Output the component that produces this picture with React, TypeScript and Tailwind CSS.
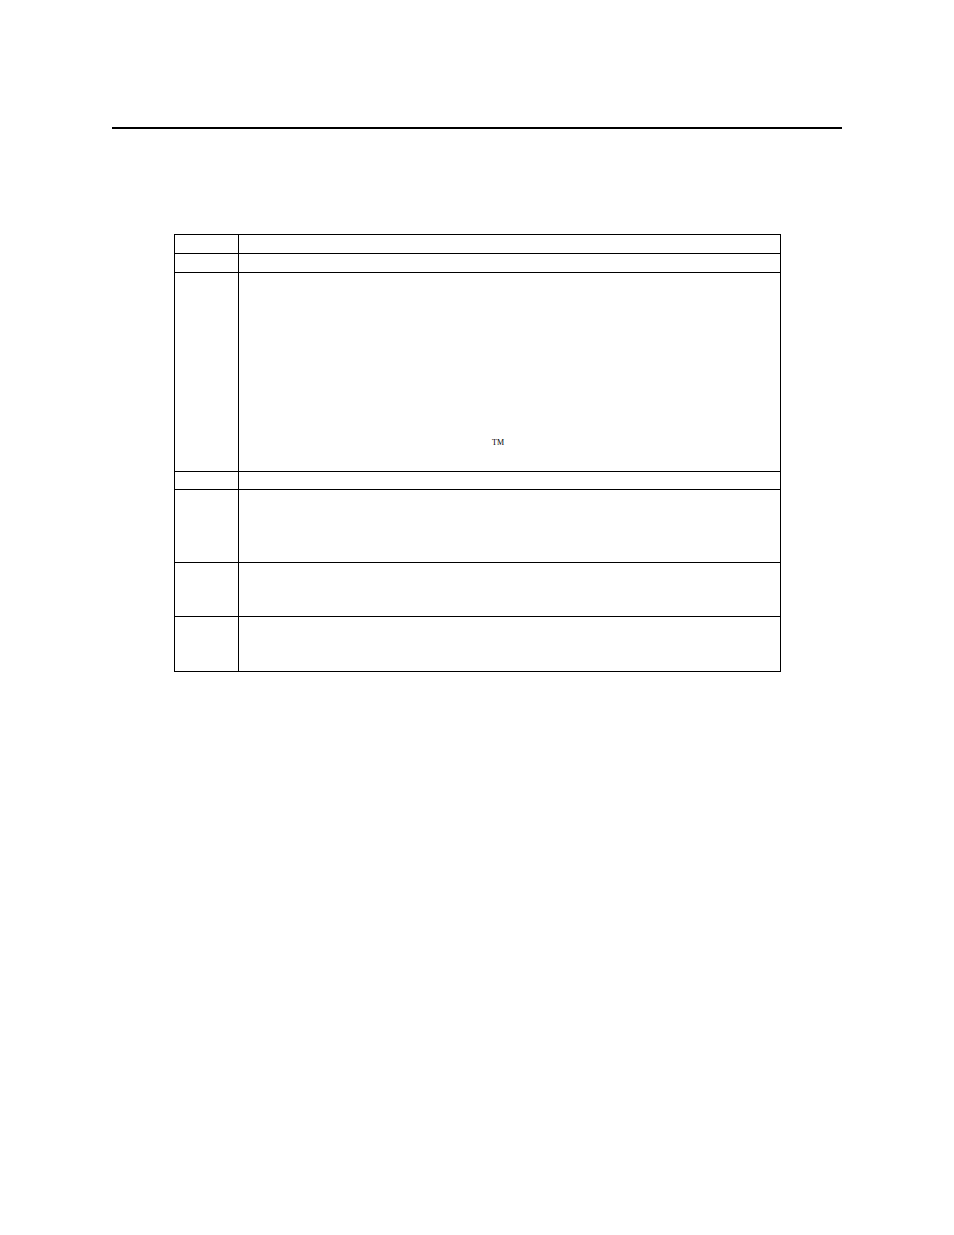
import React from 'react';

const rows = [
  { h: 'h-[18px]' },
  { h: 'h-[19px]' },
  { h: 'h-[199px]', tm: true },
  { h: 'h-[18px]' },
  { h: 'h-[73px]' },
  { h: 'h-[54px]' },
  { h: 'h-[55px]' },
];

const App: React.FC = () => {
  return (
    <div className="w-[954px] h-[1235px] bg-white font-['Liberation_Serif',serif] text-black">
      {/* Header rule */}
      <div className="pt-[127px] pl-[112px]">
        <div className="w-[730px] h-[2px] bg-black" />
      </div>

      {/* Table */}
      <div className="mt-[105px] ml-[174px] w-[607px] border border-black">
        {rows.map((row, i) => (
          <div key={i} className={`flex ${row.h} ${i > 0 ? 'border-t border-black' : ''}`}>
            <div className="w-[64px] shrink-0 border-r border-black" />
            <div className="flex-1">
              {row.tm && (
                <div className="pl-[253px] pt-[166px] text-[8px] leading-none">TM</div>
              )}
            </div>
          </div>
        ))}
      </div>
    </div>
  );
};

export default App;
